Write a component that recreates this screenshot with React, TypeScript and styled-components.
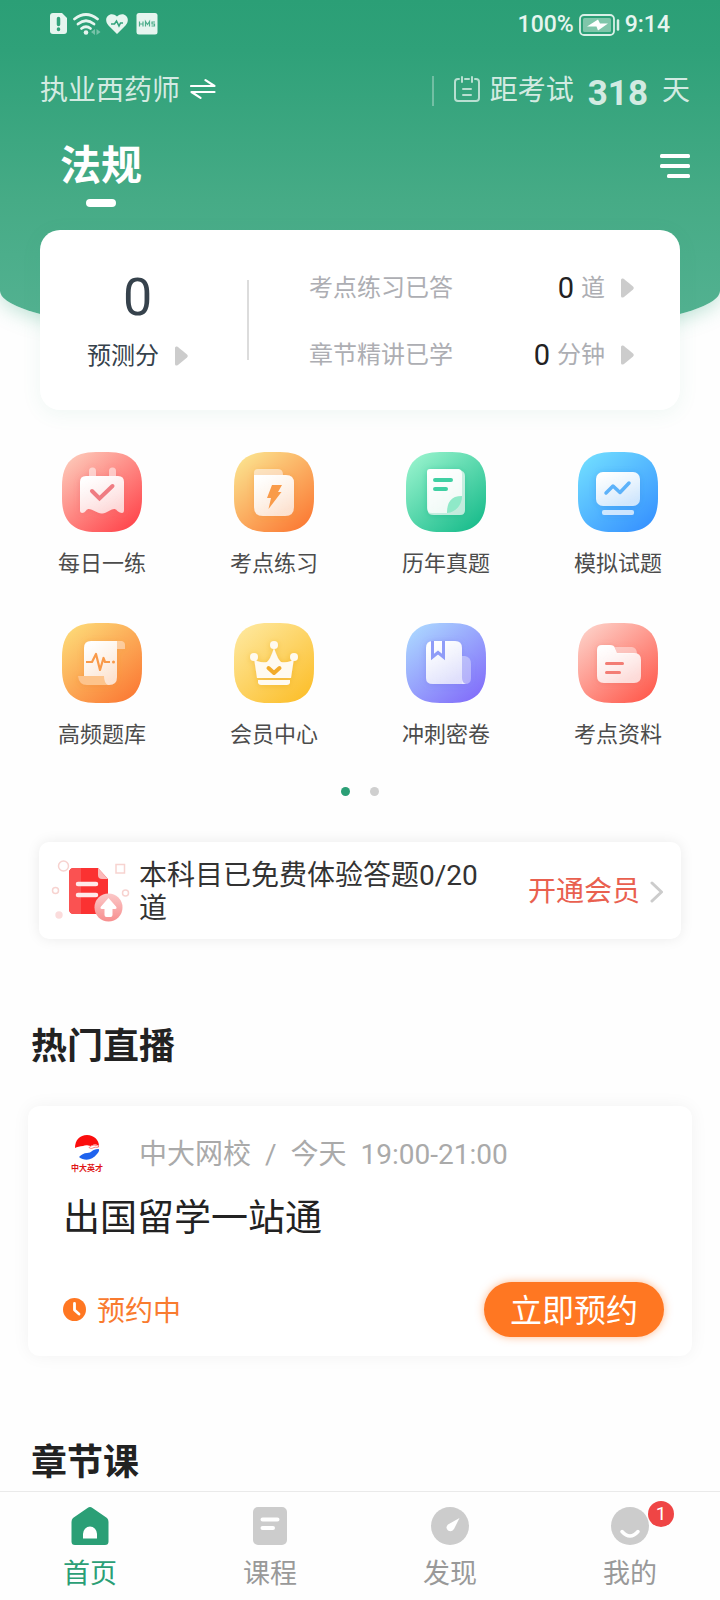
import React from 'react';
import styled, { createGlobalStyle } from 'styled-components';

const GlobalStyle = createGlobalStyle`
  * { box-sizing: border-box; }
  body {
    margin: 0;
    background: #fefefe;
    color: #222;
    font-family: Roboto, 'Noto Sans CJK SC', sans-serif;
  }
  h1, h2, h3, p, ul { margin: 0; padding: 0; }
  ul { list-style: none; }
  a { color: inherit; text-decoration: none; }
  button { margin: 0; padding: 0; border: 0; background: none; font: inherit; color: inherit; cursor: pointer; }
  svg { display: block; flex: none; }
`;

const Page = styled.div`
  display: flex;
  flex-direction: column;
  min-height: 100vh;
`;

/* ---------- header ---------- */

const Header = styled.header`
  padding-bottom: 134px;
  background: linear-gradient(#2b9f76 0, #2fa179 50px, #46ab86 200px, #52b190 310px);
  border-radius: 0 0 50% 50% / 0 0 50px 50px;
  box-shadow: 0 4px 20px rgba(70, 175, 138, 0.35);
  color: #fff;
`;

const StatusBar = styled.div`
  display: flex;
  justify-content: space-between;
  align-items: center;
  height: 48px;
  padding: 0 50px;
  color: #e6f5ef;
  font-size: 23px;
  font-weight: 500;
  line-height: 28px;
`;

const StatusGroup = styled.div`
  display: flex;
  align-items: center;
  gap: 5px;
  padding-top: 2px;
`;

const ExamRow = styled.div`
  display: flex;
  justify-content: space-between;
  align-items: center;
  height: 84px;
  padding: 2px 30px 0 40px;
  color: rgba(255, 255, 255, 0.8);
  font-size: 28px;
  line-height: 32px;

  svg {
    margin-bottom: 4px;
  }
`;

const SwitchExam = styled.button`
  display: flex;
  align-items: center;
  gap: 10px;
`;

const Countdown = styled.div`
  display: flex;
  align-items: center;
  gap: 14px;
`;

const CountLabel = styled.span`
  display: flex;
  align-items: center;
  gap: 10px;
  padding-left: 20px;
  border-left: 2px solid rgba(255, 255, 255, 0.3);
  line-height: 28px;
`;

const Days = styled.strong`
  font-size: 35px;
  line-height: 32px;
  padding-top: 6px;
`;

const SubjectRow = styled.div`
  display: flex;
  justify-content: space-between;
  align-items: flex-start;
  padding: 8px 30px 0 60px;
`;

const Subject = styled.h1`
  display: flex;
  flex-direction: column;
  align-items: center;
  gap: 7px;
  font-size: 41px;
  line-height: 52px;
  font-weight: 700;

  &::after {
    content: '';
    width: 30px;
    height: 8px;
    border-radius: 4px;
    background: #fff;
  }
`;

const MenuButton = styled.button`
  padding-top: 14px;
`;

/* ---------- score card ---------- */

const ScoreCard = styled.section`
  display: flex;
  align-items: center;
  height: 180px;
  margin: -111px 40px 0;
  border-radius: 20px;
  background: #fff;
  box-shadow: 0 4px 20px rgba(60, 160, 130, 0.08);
`;

const Predicted = styled.a`
  display: flex;
  flex-direction: column;
  align-items: center;
  gap: 18px;
  width: 207px;
  padding: 2px 12px 0 0;
  color: #36424c;
`;

const PredictedScore = styled.span`
  font-size: 52px;
  line-height: 52px;
`;

const PredictedLabel = styled.span`
  display: flex;
  align-items: center;
  gap: 16px;
  font-size: 24px;
  line-height: 28px;
`;

const StatList = styled.ul`
  flex: 1;
  display: flex;
  flex-direction: column;
  gap: 39px;
  height: 80px;
  justify-content: center;
  padding: 2px 46px 0 60px;
  border-left: 2px solid #dcdcdc;
`;

const StatLink = styled.a`
  display: flex;
  align-items: center;
  color: #adaeb3;
  font-size: 24px;
  line-height: 28px;
`;

const StatName = styled.span`
  flex: 1;
`;

const StatValue = styled.span`
  margin-right: 7px;
  color: #222;
  font-size: 29px;
`;

const StatUnit = styled.span`
  margin-right: 16px;
`;

/* ---------- shortcuts ---------- */

const Shortcuts = styled.ul`
  display: grid;
  grid-template-columns: repeat(4, 1fr);
  row-gap: 44px;
  padding: 42px 16px 0;
`;

const Shortcut = styled.a`
  display: flex;
  flex-direction: column;
  align-items: center;
  gap: 17px;
  color: #4c4c4c;
  font-size: 22px;
  line-height: 30px;
`;

const Dots = styled.div`
  display: flex;
  justify-content: center;
  gap: 20px;
  padding: 37px 0 46px;
`;

const Dot = styled.button<{ $active?: boolean }>`
  width: 9px;
  height: 9px;
  border-radius: 50%;
  background: ${(p) => (p.$active ? '#2b9f76' : '#cfcfcf')};
`;

/* ---------- membership banner ---------- */

const Banner = styled.section`
  display: flex;
  align-items: center;
  min-height: 97px;
  margin: 0 39px;
  padding: 0 17px 0 12px;
  border-radius: 10px;
  background: #fff;
  box-shadow: 0 0 14px rgba(0, 0, 0, 0.08);
  font-size: 28px;
  line-height: 33px;
`;

const BannerText = styled.p`
  flex: 1;
  margin: 0 24px 0 8px;
  padding-top: 3px;
  color: #333;
`;

const BannerLink = styled.a`
  display: flex;
  align-items: center;
  gap: 10px;
  padding-top: 2px;
  color: #e9604f;
`;

/* ---------- live section ---------- */

const SectionTitle = styled.h2`
  padding: 0 31px;
  color: #222;
  font-size: 36px;
  font-weight: 700;
  line-height: 44px;
`;

const LiveSection = styled.section`
  padding: 86px 0 85px;
`;

const LiveCard = styled.article`
  margin: 37px 28px 0;
  padding: 24px 28px 19px 35px;
  border-radius: 12px;
  background: #fff;
  box-shadow: 0 0 18px rgba(0, 0, 0, 0.05);
`;

const LiveMeta = styled.div`
  display: flex;
  align-items: center;
  gap: 14px;
  color: #aaa;
  font-size: 28px;
  line-height: 32px;

  > span {
    padding-top: 5px;
  }
`;

const Logo = styled.div`
  display: flex;
  flex-direction: column;
  align-items: center;
  gap: 3px;
  width: 48px;
  margin-right: 14px;
  padding-top: 5px;
  color: #e01515;
  font-size: 8px;
  font-weight: 700;
  line-height: 12px;
`;

const LiveTitle = styled.h3`
  margin-top: 22px;
  color: #222;
  font-size: 37px;
  font-weight: 400;
  line-height: 44px;
`;

const LiveFoot = styled.div`
  display: flex;
  justify-content: space-between;
  align-items: center;
  margin-top: 41px;
`;

const LiveState = styled.div`
  display: flex;
  align-items: center;
  gap: 11px;
  color: #f97b2f;
  font-size: 28px;
  line-height: 32px;

  > span {
    padding-top: 4px;
  }
`;

const BookButton = styled.button`
  width: 180px;
  height: 55px;
  padding-top: 3px;
  border-radius: 28px;
  background: #ff7722;
  box-shadow: 0 0 8px rgba(255, 119, 34, 0.5);
  color: #fff;
  font-size: 32px;
  line-height: 52px;
`;

/* ---------- tab bar ---------- */

const TabBar = styled.nav`
  position: sticky;
  bottom: 0;
  display: grid;
  grid-template-columns: repeat(4, 1fr);
  height: 109px;
  margin-top: auto;
  border-top: 1px solid #eaeaea;
  background: #fefefe;
`;

const Tab = styled.a<{ $active?: boolean }>`
  display: flex;
  flex-direction: column;
  align-items: center;
  gap: 13px;
  padding-top: 15px;
  color: ${(p) => (p.$active ? '#2b9f76' : '#999')};
  font-size: 27px;
  line-height: 32px;
`;

const TabIcon = styled.span`
  position: relative;
`;

const Badge = styled.span`
  position: absolute;
  top: -6px;
  left: 37px;
  width: 26px;
  height: 26px;
  border-radius: 50%;
  background: #ef4545;
  color: #fff;
  font-size: 19px;
  line-height: 25px;
  text-align: center;
`;

/* ---------- small drawings ---------- */

const Triangle = () => (
  <svg width="13" height="20" viewBox="0 0 13 20" aria-hidden="true">
    <path d="M0 2Q0 0 2 .5Q3 .8 12 8.500Q13.500 10 12 11.500Q3 19.200 2 19.500Q0 20 0 18Z" fill="#ccc" />
  </svg>
);

const squircle = 'M34 0H46C69 0 80 11 80 34V46C80 69 69 80 46 80H34C11 80 0 69 0 46V34C0 11 11 0 34 0Z';

type TileProps = { id: string; from: string; to: string; shade: string; children: React.ReactNode };

const Tile = ({ id, from, to, shade, children }: TileProps) => (
  <svg width="80" height="80" viewBox="0 0 80 80" aria-hidden="true">
    <defs>
      <linearGradient id={`${id}-bg`} x1="0.1" y1="0.05" x2="0.85" y2="0.95">
        <stop offset="0" stopColor={from} />
        <stop offset="1" stopColor={to} />
      </linearGradient>
      <linearGradient id={`${id}-fg`} x1="0" y1="0" x2="0.5" y2="1">
        <stop offset="0.1" stopColor="#fff" />
        <stop offset="1" stopColor="#fff" stopOpacity="0.72" />
      </linearGradient>
      <filter id={`${id}-sh`} x="-30%" y="-30%" width="160%" height="160%">
        <feDropShadow dx="0" dy="1" stdDeviation="3" floodColor={shade} floodOpacity="0.4" />
      </filter>
    </defs>
    <path d={squircle} fill={`url(#${id}-bg)`} />
    <g filter={`url(#${id}-sh)`}>{children}</g>
  </svg>
);

const DailyIcon = () => (
  <Tile id="daily" from="#fdc8b8" to="#ff484e" shade="#e85a60">
    <path d="M27 24V19a3.500 3.500 0 0 1 7 0v5zM47 24V19a3.500 3.500 0 0 1 7 0v5z" fill="#fff" opacity="0.5" />
    <path d="M18 30q0-6 6-6h32q6 0 6 6v28q0 4-4 2.500c-3-1-3-3.500-6-3.500-4 0-7 4.500-12 4.500S31 57 27 57c-3 0-3 2.500-5 3.500-4 1.500-4-1.500-4-2.500z" fill="url(#daily-fg)" />
    <path d="M30 39l7.500 7.500L50.500 34" fill="none" stroke="#ef7c82" strokeWidth="4" strokeLinecap="round" />
  </Tile>
);

const PracticeIcon = () => (
  <Tile id="practice" from="#fbe28e" to="#fb7c36" shade="#ea8a30">
    <path d="M20 23v-2q0-4 4-4h20q5 0 5 6z" fill="#fff" opacity="0.5" />
    <path d="M20 23h32q8 0 8 8v24q0 9-9 9H29q-9 0-9-9z" fill="url(#practice-fg)" />
    <path d="M38 33h10l-4 7h3.500L34.500 57 37 46h-4z" fill="#f99b4a" />
  </Tile>
);

const PapersIcon = () => (
  <Tile id="papers" from="#96f2cc" to="#1cbd8d" shade="#1fa87c">
    <path d="M23 18h30q6 1 6 6v34q0 5-5 5H28q-5 0-6-3z" fill="#fff" opacity="0.65" />
    <path d="M21 20q0-3 3-3h29q3 1 3 5v22L42 61H26q-5 0-5-5z" fill="url(#papers-fg)" />
    <path d="M29 28h16M29 37h11" stroke="#41d0a3" strokeWidth="4" strokeLinecap="round" />
    <path d="M41 61c0-11 4-17 15-17 0 9-6 16-15 17z" fill="#8fe9c8" />
  </Tile>
);

const MockIcon = () => (
  <Tile id="mock" from="#70dcff" to="#3894ff" shade="#2f80e0">
    <rect x="18" y="20" width="44" height="34" rx="7" fill="url(#mock-fg)" />
    <rect x="24" y="58" width="32" height="5" rx="2" fill="#fff" opacity="0.7" />
    <path d="M28 41l7-7 7 6.500L51 31" fill="none" stroke="#5cb2fa" strokeWidth="3.500" strokeLinecap="round" strokeLinejoin="round" />
  </Tile>
);

const FrequentIcon = () => (
  <Tile id="frequent" from="#fdd977" to="#fb7c36" shade="#ea8a30">
    <path d="M55 18h5q3 1 3 4v4h-8z" fill="#fff" opacity="0.4" />
    <path d="M29 18h26v36q0 8-8 8H30V53h-8V25q0-7 7-7z" fill="url(#frequent-fg)" />
    <path d="M16 53h26q0 7 4 9H25q-8 0-9-9z" fill="#fdc48c" />
    <path d="M24 39h6l4-8 4 16 3.500-12 1.500 4h5" fill="none" stroke="#f99a4a" strokeWidth="2.200" strokeLinejoin="round" />
    <circle cx="51.500" cy="39" r="1.500" fill="#f99a4a" />
  </Tile>
);

const MemberIcon = () => (
  <Tile id="member" from="#fee79b" to="#fcc02f" shade="#e59c12">
    <g fill="#fffaf0">
      <circle cx="20" cy="34" r="4" />
      <circle cx="40" cy="22" r="4" />
      <circle cx="60" cy="34" r="4" />
      <path d="M20 35l3 3q5 2 10 1 3-2 7-14 4 12 7 14 5 1 10-1l3-3-3 20H23z" />
      <path d="M24 57h32v3q-1 2-3 2H27q-2 0-3-2z" />
    </g>
    <path d="M34.500 45l5.500 5 5.500-5" fill="none" stroke="#f2ab2b" strokeWidth="4" strokeLinecap="round" strokeLinejoin="round" />
  </Tile>
);

const SecretIcon = () => (
  <Tile id="secret" from="#abd6ff" to="#8370fa" shade="#6a70e0">
    <path d="M56 33h3q6 1 6 8v14q0 6-6 6h-3z" fill="#fff" opacity="0.35" />
    <path d="M27 18h22q7 0 7 7v30q0 5 4 6H27q-7 0-7-6V25q0-7 7-7z" fill="url(#secret-fg)" />
    <path d="M26.500 18v16l5.500-4.500 5.500 4.500V18" fill="none" stroke="#8f9cf8" strokeWidth="3" />
  </Tile>
);

const MaterialIcon = () => (
  <Tile id="material" from="#fdcfc6" to="#ff5d50" shade="#e86058">
    <path d="M37 24h17q5 1 5 7H39z" fill="#fff" opacity="0.4" />
    <path d="M24 22h8q4 0 5 3l2 5h17q7 0 7 7v16q0 7-7 7H26q-7 0-7-7V27q0-5 5-5z" fill="url(#material-fg)" />
    <path d="M28.500 40.500h16M28.500 49.500h13" stroke="#f37d74" strokeWidth="3" strokeLinecap="round" />
  </Tile>
);

const shortcuts = [
  { name: '每日一练', Icon: DailyIcon },
  { name: '考点练习', Icon: PracticeIcon },
  { name: '历年真题', Icon: PapersIcon },
  { name: '模拟试题', Icon: MockIcon },
  { name: '高频题库', Icon: FrequentIcon },
  { name: '会员中心', Icon: MemberIcon },
  { name: '冲刺密卷', Icon: SecretIcon },
  { name: '考点资料', Icon: MaterialIcon },
];

const stats = [
  { name: '考点练习已答', value: 0, unit: '道' },
  { name: '章节精讲已学', value: 0, unit: '分钟' },
];

const StatusIcons = () => (
  <svg width="108" height="22" viewBox="0 0 108 22" fill="#e6f5ef" aria-hidden="true">
    <path d="M3 0h9l5 5v13q0 3-3 3H3q-3 0-3-3V3q0-3 3-3z" />
    <path d="M8.500 5.500v6M8.500 16v.5" stroke="#33a37c" strokeWidth="3.500" strokeLinecap="round" />
    <g fill="none" stroke="#e6f5ef" strokeWidth="2.800" strokeLinecap="round">
      <path d="M24.500 6Q36 -3 47.500 6" />
      <path d="M28 11Q36 4.500 44 11" />
      <path d="M31.500 15.500Q36 12 40.500 15.500" />
    </g>
    <circle cx="36" cy="19.500" r="2.300" />
    <path d="M45 16v6l-4-3zM46.500 16v6l4-3z" opacity="0.4" />
    <path d="M67 21L58.500 12.500C52 5 60.500-2.500 67 3.500 73.500-2.500 82 5 75.500 12.500z" />
    <path d="M61 11h3.500l2-3 2.500 5 1.500-3H73" fill="none" stroke="#33a37c" strokeWidth="1.600" />
    <rect x="86.500" y="0" width="21" height="21.500" rx="2.500" />
    <path d="M89.500 8.500v5M93 8.500v5M89.500 11h3.500M95.500 13.500v-5l2 3 2-3v5M105 9h-3v2h2.500v2h-3" fill="none" stroke="#4fae8c" strokeWidth="1.200" />
  </svg>
);

const BatteryIcon = () => (
  <svg width="41" height="22" viewBox="0 0 41 22" aria-hidden="true">
    <rect x="1" y="1" width="34" height="20" rx="4" fill="none" stroke="#d9f0e7" strokeWidth="1.800" />
    <rect x="4" y="4" width="28" height="14" rx="1.500" fill="#7fc6aa" />
    <path d="M19 5.500l2 4h8L19 16.500l-1.500-4H8z" fill="#fff" />
    <path d="M39 6.500v9" stroke="#d9f0e7" strokeWidth="2.500" strokeLinecap="round" />
  </svg>
);

const SwapIcon = () => (
  <svg width="26" height="20" viewBox="0 0 26 20" fill="none" stroke="#fff" strokeWidth="2.200" strokeLinecap="round" strokeLinejoin="round" aria-hidden="true">
    <path d="M1 7h23.500L15.500 1.200M24.500 13H1.500L10.500 18.800" />
  </svg>
);

const CalendarIcon = () => (
  <svg width="26" height="26" viewBox="0 0 26 26" fill="none" stroke="rgba(255,255,255,0.65)" strokeWidth="2" strokeLinecap="round" aria-hidden="true">
    <path d="M5 3H4Q1 3 1 6v16q0 3 3 3h18q3 0 3-3V6q0-3-3-3h-1M11 3h4" />
    <path d="M8 1v5M18 1v5M9 13h8M9 19h8" />
  </svg>
);

const UpgradeIcon = () => (
  <svg width="80" height="68" viewBox="0 0 80 68" aria-hidden="true">
    <defs>
      <linearGradient id="up-circle" x1="0" y1="0" x2="0" y2="1">
        <stop offset="0" stopColor="#fbc8c8" />
        <stop offset="1" stopColor="#f78f8f" />
      </linearGradient>
    </defs>
    <g fill="none" stroke="#f7d3d0" strokeWidth="1.500">
      <circle cx="12.500" cy="9" r="5" />
      <rect x="65" y="7.500" width="8.500" height="8.500" />
      <circle cx="4.500" cy="33.500" r="3" />
      <circle cx="74.500" cy="36" r="3" />
    </g>
    <circle cx="8" cy="58" r="3.700" fill="#fbdcdc" />
    <path d="M23 11h24l10 11v30q0 5-5 5H23q-5 0-5-5V16q0-5 5-5z" fill="#fb3232" />
    <path d="M23 11h7v46h-7q-5 0-5-5V16q0-5 5-5z" fill="#fa5252" />
    <path d="M47 11l10 11h-6q-4 0-4-4z" fill="#fbb9b9" />
    <path d="M27 27h18M27 38h18" stroke="#ffeaea" strokeWidth="4.500" strokeLinecap="round" />
    <circle cx="57.500" cy="50.500" r="14" fill="url(#up-circle)" />
    <path d="M57.500 41l7.500 8.500q1.500 2-1 2.500h-2.500v6q0 2-2 2h-4q-2 0-2-2v-6H51q-2.500-.500-1-2.500z" fill="#fff" />
  </svg>
);

const SchoolMark = () => (
  <svg width="26" height="25" viewBox="0 0 26 25" aria-hidden="true">
    <path d="M1 13C1 5 6 0 13 0s12 5 12 11c-2-2-6-2-8 0-4-1-6-1-8 0-3 0-6 1-8 2z" fill="#fb0d0d" />
    <path d="M15 12.500c2-2.500 6-3 10-1-2 2-3 0-5 1-2 1-3 1.500-5 0z" fill="#fff" stroke="#f33" strokeWidth="0.600" />
    <path d="M5 22c2-2 5-4 8-4 5 0 5-4 11-4 2 0 1 3-1 5-5 7-13 7-18 3z" fill="#1f63ee" />
  </svg>
);

const ClockIcon = () => (
  <svg width="23" height="23" viewBox="0 0 23 23" aria-hidden="true">
    <circle cx="11.500" cy="11.500" r="11.500" fill="#ff7722" />
    <path d="M11.500 5.500v6.500l4.500 4" fill="none" stroke="#fff" strokeWidth="2.800" strokeLinecap="round" strokeLinejoin="round" />
  </svg>
);

const tabs = [
  {
    name: '首页',
    active: true,
    icon: (
      <svg width="38" height="38" viewBox="0 0 38 38" aria-hidden="true">
        <path d="M16.500 1q2.500-2 5 0L36 11q1.500 1.500 1.500 4v19.500q0 3.500-3.500 3.500H4Q.5 38 .5 34.500V15q0-2.500 1.500-4z" fill="#2b9f76" />
        <path d="M12 31.500V27a7 7.500 0 0 1 14 0v4.500z" fill="#fff" />
      </svg>
    ),
  },
  {
    name: '课程',
    icon: (
      <svg width="38" height="38" viewBox="0 0 38 38" aria-hidden="true">
        <rect x="2" width="34" height="38" rx="5" fill="#ccc" />
        <path d="M11.500 12.500H26.500M11.500 21H22" stroke="#fff" strokeWidth="4" strokeLinecap="round" />
      </svg>
    ),
  },
  {
    name: '发现',
    icon: (
      <svg width="38" height="38" viewBox="0 0 38 38" aria-hidden="true">
        <circle cx="19" cy="19" r="19" fill="#ccc" />
        <path d="M28.500 11L23 22q-2.500 3.500-6 1.500-3-3 0-6z" fill="#fff" />
      </svg>
    ),
  },
  {
    name: '我的',
    badge: 1,
    icon: (
      <svg width="38" height="38" viewBox="0 0 38 38" aria-hidden="true">
        <circle cx="19" cy="19" r="19" fill="#ccc" />
        <path d="M11 24.500q8 9 16 0" fill="none" stroke="#fff" strokeWidth="3.500" strokeLinecap="round" />
      </svg>
    ),
  },
];

export default function App() {
  return (
    <Page>
      <GlobalStyle />
      <Header>
        <StatusBar>
          <StatusIcons />
          <StatusGroup>
            <span>100%</span>
            <BatteryIcon />
            <span>9:14</span>
          </StatusGroup>
        </StatusBar>
        <ExamRow>
          <SwitchExam type="button">
            执业西药师
            <SwapIcon />
          </SwitchExam>
          <Countdown>
            <CountLabel>
              <CalendarIcon />
              距考试
            </CountLabel>
            <Days>318</Days>
            <span>天</span>
          </Countdown>
        </ExamRow>
        <SubjectRow>
          <Subject>法规</Subject>
          <MenuButton type="button" aria-label="菜单">
            <svg width="30" height="24" viewBox="0 0 30 24" fill="#fff" aria-hidden="true">
              <rect width="30" height="4" rx="1.500" />
              <rect y="10" width="30" height="4" rx="1.500" />
              <rect x="7" y="20" width="23" height="4" rx="1.500" />
            </svg>
          </MenuButton>
        </SubjectRow>
      </Header>

      <ScoreCard>
        <Predicted href="#score">
          <PredictedScore>0</PredictedScore>
          <PredictedLabel>
            预测分
            <Triangle />
          </PredictedLabel>
        </Predicted>
        <StatList>
          {stats.map((s) => (
            <li key={s.name}>
              <StatLink href="#stats">
                <StatName>{s.name}</StatName>
                <StatValue>{s.value}</StatValue>
                <StatUnit>{s.unit}</StatUnit>
                <Triangle />
              </StatLink>
            </li>
          ))}
        </StatList>
      </ScoreCard>

      <Shortcuts>
        {shortcuts.map(({ name, Icon }) => (
          <li key={name}>
            <Shortcut href="#shortcut">
              <Icon />
              {name}
            </Shortcut>
          </li>
        ))}
      </Shortcuts>
      <Dots>
        <Dot type="button" aria-label="第1页" $active />
        <Dot type="button" aria-label="第2页" />
      </Dots>

      <Banner>
        <UpgradeIcon />
        <BannerText>本科目已免费体验答题0/20道</BannerText>
        <BannerLink href="#member">
          开通会员
          <svg width="14" height="22" viewBox="0 0 14 22" fill="none" stroke="#ccc" strokeWidth="3" strokeLinecap="round" strokeLinejoin="round" aria-hidden="true">
            <path d="M2 2l9.500 9L2 20" />
          </svg>
        </BannerLink>
      </Banner>

      <LiveSection>
        <SectionTitle>热门直播</SectionTitle>
        <LiveCard>
          <LiveMeta>
            <Logo>
              <SchoolMark />
              中大英才
            </Logo>
            <span>中大网校</span>
            <span>/</span>
            <span>今天</span>
            <span>19:00-21:00</span>
          </LiveMeta>
          <LiveTitle>出国留学一站通</LiveTitle>
          <LiveFoot>
            <LiveState>
              <ClockIcon />
              <span>预约中</span>
            </LiveState>
            <BookButton type="button">立即预约</BookButton>
          </LiveFoot>
        </LiveCard>
      </LiveSection>

      <SectionTitle>章节课</SectionTitle>

      <TabBar>
        {tabs.map((t) => (
          <Tab key={t.name} href="#tab" $active={t.active}>
            <TabIcon>
              {t.icon}
              {t.badge && <Badge>{t.badge}</Badge>}
            </TabIcon>
            {t.name}
          </Tab>
        ))}
      </TabBar>
    </Page>
  );
}
